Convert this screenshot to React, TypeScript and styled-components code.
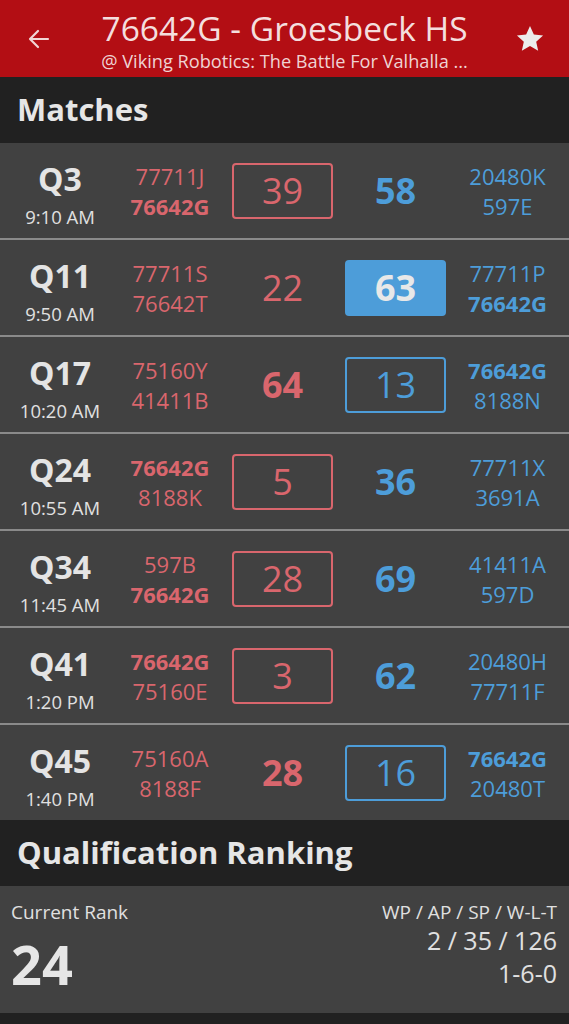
import React from 'react'
import styled, { createGlobalStyle, css } from 'styled-components'

const GlobalStyle = createGlobalStyle`
  html, body {
    margin: 0;
    padding: 0;
    background: #212121;
    font-family: 'Open Sans', 'Noto Sans', sans-serif;
  }
  * {
    box-sizing: border-box;
  }
`

const RED = '#d9666d'
const BLUE = '#4d9dd9'

const Page = styled.div`
  width: 569px;
  min-height: 1024px;
  background: #212121;
`

const TopBar = styled.header`
  height: 77px;
  background: #b30e14;
  display: grid;
  grid-template-columns: 78px 1fr 78px;
  align-items: center;
`

const IconButton = styled.div`
  display: flex;
  align-items: center;
  justify-content: center;
  height: 77px;
`

const TitleBlock = styled.div`
  display: flex;
  flex-direction: column;
  align-items: center;
  margin-top: 5px;
`

const Title = styled.div`
  font-size: 33.5px;
  line-height: 38px;
  color: #f4dede;
  white-space: nowrap;
`

const Subtitle = styled.div`
  font-size: 18.2px;
  line-height: 24px;
  margin-top: 2px;
  color: #efd3d3;
  white-space: nowrap;
`

const SectionHeader = styled.h2`
  margin: 0;
  height: 66px;
  display: flex;
  align-items: center;
  padding: 0 17px 2px;
  font-size: 31px;
  font-weight: 700;
  color: #e6e6e6;
  background: #212121;
`

const MatchList = styled.div`
  background: #414141;
`

const Row = styled.div`
  height: 97px;
  display: grid;
  grid-template-columns: 120px 100px 125px 101px 123px;
  align-items: center;
  border-bottom: 2px solid #8a8a8a;

  &:last-child {
    height: 95px;
    border-bottom: none;
  }
`

const MatchInfo = styled.div`
  display: flex;
  flex-direction: column;
  align-items: center;
  margin-top: 8px;
`

const MatchName = styled.div`
  font-size: 32px;
  line-height: 36px;
  font-weight: 700;
  color: #e4e4e4;
`

const MatchTime = styled.div`
  font-size: 18.5px;
  line-height: 24px;
  margin-top: 8px;
  color: #e0e0e0;
`

const Teams = styled.div`
  display: flex;
  flex-direction: column;
  align-items: center;
`

const Team = styled.div<{ $color: string; $own: boolean }>`
  font-size: 22px;
  line-height: 30px;
  color: ${p => p.$color};
  font-weight: ${p => (p.$own ? 700 : 400)};
`

const ScoreCell = styled.div`
  display: flex;
  justify-content: center;
`

const Score = styled.div<{
  $color: string
  $win: boolean
  $boxed: boolean
}>`
  width: 101px;
  height: 56px;
  display: flex;
  align-items: center;
  justify-content: center;
  font-size: 36px;
  color: ${p => p.$color};
  font-weight: ${p => (p.$win ? 700 : 400)};
  border-radius: 4px;
  ${p =>
    p.$boxed &&
    (p.$win
      ? css`
          background: ${p.$color};
          color: #e8e8e8;
        `
      : css`
          border: 2px solid ${p.$color};
        `)}
`

const RankCard = styled.div`
  height: 127px;
  background: #414141;
  display: flex;
  justify-content: space-between;
  padding: 14px 12px 0 11px;
`

const RankLeft = styled.div`
  display: flex;
  flex-direction: column;
`

const RankRight = styled.div`
  display: flex;
  flex-direction: column;
  align-items: flex-end;
`

const Label = styled.div`
  font-size: 19px;
  line-height: 24px;
  color: #e0e0e0;
`

const RankValue = styled.div`
  font-size: 54px;
  line-height: 60px;
  font-weight: 700;
  color: #e6e6e6;
  margin-top: 10px;
`

const Stat = styled.div`
  font-size: 25px;
  line-height: 33px;
  color: #e0e0e0;
`

type Match = {
  name: string
  time: string
  red: [string, string]
  blue: [string, string]
  redScore: number
  blueScore: number
}

const OWN = '76642G'

const matches: Match[] = [
  { name: 'Q3', time: '9:10 AM', red: ['77711J', '76642G'], blue: ['20480K', '597E'], redScore: 39, blueScore: 58 },
  { name: 'Q11', time: '9:50 AM', red: ['77711S', '76642T'], blue: ['77711P', '76642G'], redScore: 22, blueScore: 63 },
  { name: 'Q17', time: '10:20 AM', red: ['75160Y', '41411B'], blue: ['76642G', '8188N'], redScore: 64, blueScore: 13 },
  { name: 'Q24', time: '10:55 AM', red: ['76642G', '8188K'], blue: ['77711X', '3691A'], redScore: 5, blueScore: 36 },
  { name: 'Q34', time: '11:45 AM', red: ['597B', '76642G'], blue: ['41411A', '597D'], redScore: 28, blueScore: 69 },
  { name: 'Q41', time: '1:20 PM', red: ['76642G', '75160E'], blue: ['20480H', '77711F'], redScore: 3, blueScore: 62 },
  { name: 'Q45', time: '1:40 PM', red: ['75160A', '8188F'], blue: ['76642G', '20480T'], redScore: 28, blueScore: 16 }
]

const BackIcon = () => (
  <svg width="24" height="24" viewBox="0 0 24 24" fill="none" stroke="#f2d6d6" strokeWidth="2.2" strokeLinecap="round" strokeLinejoin="round">
    <path d="M21 12H3M11 4l-8 8 8 8" />
  </svg>
)

const StarIcon = () => (
  <svg width="28" height="27" viewBox="0 0 24 23">
    <path d="M12 0.8l3.3 7.3 7.9.8-5.9 5.3 1.7 7.8L12 18l-7 4 1.7-7.8L0.8 8.9l7.9-.8z" fill="#ececec" />
  </svg>
)

const TeamList = ({ teams, color }: { teams: [string, string]; color: string }) => (
  <Teams>
    {teams.map(t => (
      <Team key={t} $color={color} $own={t === OWN}>
        {t}
      </Team>
    ))}
  </Teams>
)

const MatchRow = ({ match }: { match: Match }) => {
  const ownRed = match.red.includes(OWN)
  const redWin = match.redScore > match.blueScore
  return (
    <Row>
      <MatchInfo>
        <MatchName>{match.name}</MatchName>
        <MatchTime>{match.time}</MatchTime>
      </MatchInfo>
      <TeamList teams={match.red} color={RED} />
      <ScoreCell>
        <Score $color={RED} $win={redWin} $boxed={ownRed}>
          {match.redScore}
        </Score>
      </ScoreCell>
      <ScoreCell>
        <Score $color={BLUE} $win={!redWin} $boxed={!ownRed}>
          {match.blueScore}
        </Score>
      </ScoreCell>
      <TeamList teams={match.blue} color={BLUE} />
    </Row>
  )
}

const App = () => (
  <Page>
    <GlobalStyle />
    <TopBar>
      <IconButton>
        <BackIcon />
      </IconButton>
      <TitleBlock>
        <Title>76642G - Groesbeck HS</Title>
        <Subtitle>@ Viking Robotics: The Battle For Valhalla ...</Subtitle>
      </TitleBlock>
      <IconButton>
        <StarIcon />
      </IconButton>
    </TopBar>
    <SectionHeader>Matches</SectionHeader>
    <MatchList>
      {matches.map(m => (
        <MatchRow key={m.name} match={m} />
      ))}
    </MatchList>
    <SectionHeader>Qualification Ranking</SectionHeader>
    <RankCard>
      <RankLeft>
        <Label>Current Rank</Label>
        <RankValue>24</RankValue>
      </RankLeft>
      <RankRight>
        <Label>WP / AP / SP / W-L-T</Label>
        <Stat>2 / 35 / 126</Stat>
        <Stat>1-6-0</Stat>
      </RankRight>
    </RankCard>
  </Page>
)

export default App
